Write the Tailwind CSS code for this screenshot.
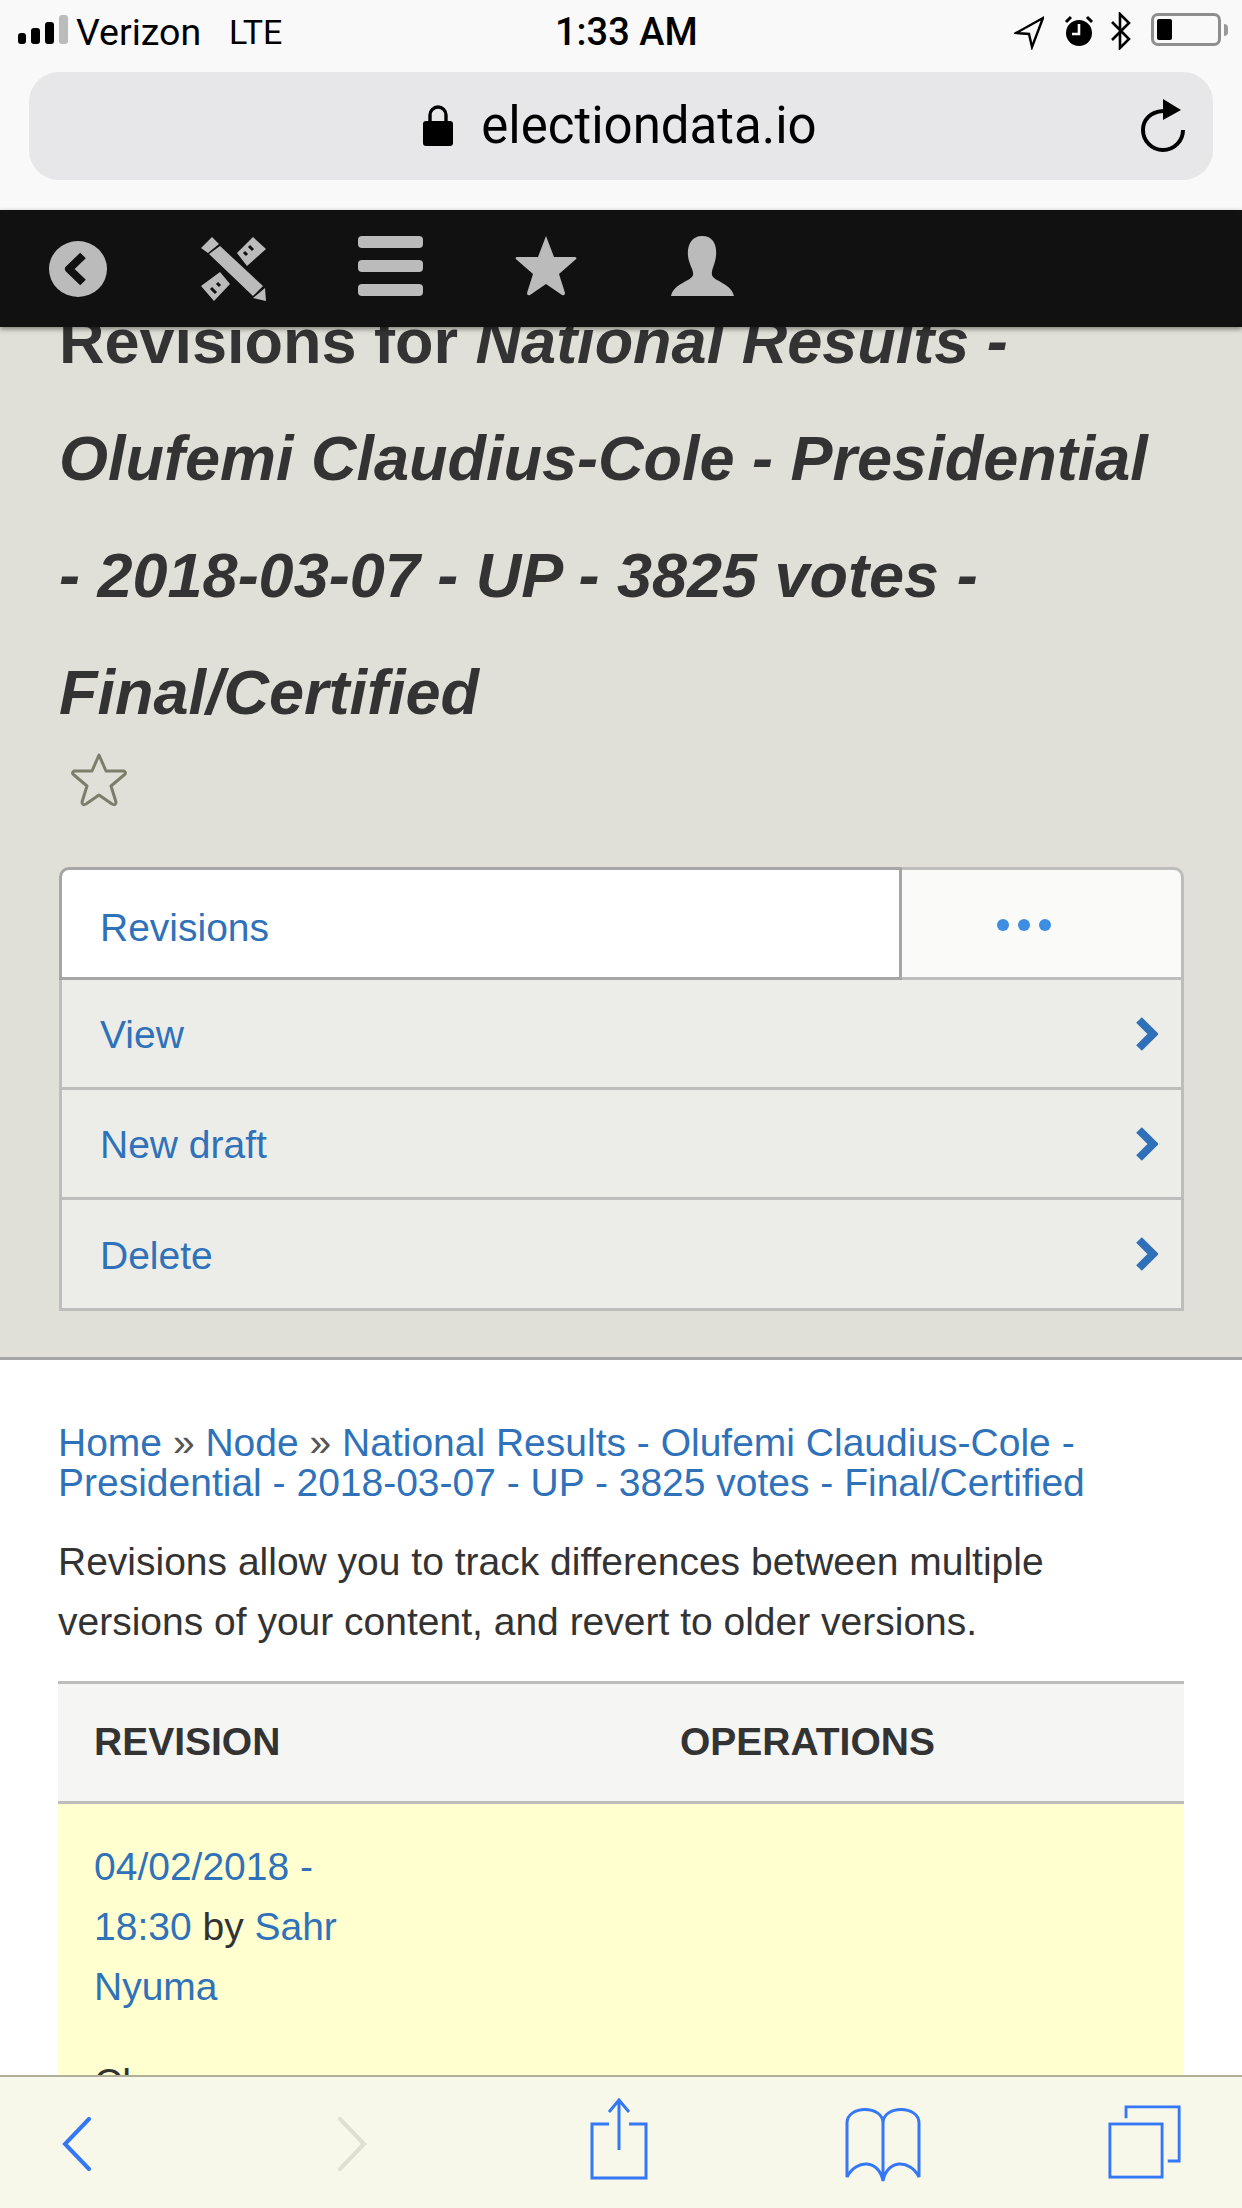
<!DOCTYPE html>
<html lang="en">
<head>
    <meta charset="UTF-8">
    <meta name="viewport" content="width=device-width, initial-scale=1.0">
    <title>Revisions - electiondata.io</title>
    <script src="https://cdn.jsdelivr.net/npm/@tailwindcss/browser@4"></script>
</head>
<body class="bg-white font-['Liberation_Sans',Arial,sans-serif] text-[#333]">
<div class="w-[1242px] h-[2208px] flex flex-col overflow-hidden">

    <!-- ios status bar + url bar -->
    <header class="h-[210px] shrink-0 bg-[#f9f9f9] text-black font-['Roboto',sans-serif]">
        <div class="h-[72px] flex items-start relative">
            <div class="flex items-end gap-[5px] ml-[18px] mt-[15px] h-[29px]">
                <span class="w-[8px] h-[11px] rounded-[3px] bg-black"></span>
                <span class="w-[9px] h-[16px] rounded-[3px] bg-black"></span>
                <span class="w-[9px] h-[22px] rounded-[3px] bg-black"></span>
                <span class="w-[9px] h-[29px] rounded-[3px] bg-[#bbb]"></span>
            </div>
            <span class="ml-[8px] mt-[11px] text-[37.5px] leading-[42px] w-[153px]">Verizon</span>
            <span class="mt-[11px] text-[34px] leading-[42px]">LTE</span>
            <span class="absolute left-[555px] top-[11px] text-[38px] leading-[42px] font-medium">1:33 AM</span>
            <div class="absolute left-[1014px] top-[12px] flex items-start">
                <svg width="30" height="34" viewBox="0 0 30 34" class="mt-[4px]"><path d="M29 2 2 17l13 1 3 13z" fill="none" stroke="#000" stroke-width="2.4" stroke-linejoin="miter"/></svg>
                <svg width="30" height="34" viewBox="0 0 30 34" class="ml-[20px] mt-[3px]"><circle cx="15" cy="18" r="13" fill="#000"/><path d="M15 9v10H8" fill="none" stroke="#f9f9f9" stroke-width="2.6"/><path d="M2 7l5-5M28 7l-5-5" stroke="#000" stroke-width="3"/></svg>
                <svg width="22" height="38" viewBox="0 0 22 38" class="ml-[16px]"><path d="M2 10 19 27 10 36V2l9 9L2 28" fill="none" stroke="#000" stroke-width="2.6"/></svg>
                <div class="ml-[19px] mt-[1px] flex items-center">
                    <div class="w-[70px] h-[33px] rounded-[7px] border-[3px] border-[#8e8e8e] p-[3px]"><div class="w-[15px] h-full rounded-[2px] bg-black"></div></div>
                    <div class="w-[4px] h-[12px] ml-[3px] rounded-r-full bg-[#9a9a9a]"></div>
                </div>
            </div>
        </div>
        <div class="mx-[29px] h-[108px] rounded-[30px] bg-[#e7e7e9] relative flex items-center justify-center">
            <div class="flex items-center gap-[28px] ml-[-2px]">
                <svg width="30" height="42" viewBox="0 0 30 42"><path d="M7 18V10a8 8 0 0 1 16 0v8" fill="none" stroke="#000" stroke-width="3.4"/><rect y="16" width="30" height="25" rx="3" fill="#000"/></svg>
                <span class="text-[51px] leading-[60px]">electiondata.io</span>
            </div>
            <svg width="46" height="54" viewBox="0 0 46 54" class="absolute right-[27px] top-[27px]"><path d="M3 31a20 20 0 1 0 40 0" fill="none" stroke="#000" stroke-width="4"/><path d="M3 31C3 21 10 13 23 12" fill="none" stroke="#000" stroke-width="4"/><path d="M23 0 41 11 23 21z" fill="#000"/></svg>
        </div>
    </header>

    <!-- site toolbar -->
    <nav class="h-[117px] shrink-0 bg-[#111] flex items-center shadow-[0_2px_5px_rgba(0,0,0,0.45)] relative z-10">
        <div class="w-[156px] flex justify-center">
            <svg width="58" height="56" viewBox="0 0 58 58" preserveAspectRatio="none"><ellipse cx="29" cy="29" rx="29" ry="29" fill="#bbb"/><path d="M34 15 20 29l14 14" fill="none" stroke="#111" stroke-width="8" stroke-linejoin="round"/></svg>
        </div>
        <div class="w-[156px] flex justify-center">
            <svg width="66" height="64" viewBox="0 0 66 64">
                <path d="M0 11 11 0l7 7-11 9zM8 17 19 9l43 40-10 10zM52 61 64 51l1 13z" fill="#bbb"/>
                <path d="M36 16 52 0l13 12-19 17zM0 49 19 35l10 12-16 17z" fill="#bbb"/>
                <path d="M48 9l4 4M43 15l3 3M10 51l5 5M16 46l3 3" stroke="#111" stroke-width="3"/>
            </svg>
        </div>
        <div class="w-[156px] flex justify-center">
            <div class="w-[65px] flex flex-col gap-[12px] mt-[-5px]">
                <span class="h-[12px] rounded-[4px] bg-[#bbb]"></span>
                <span class="h-[12px] rounded-[4px] bg-[#bbb]"></span>
                <span class="h-[12px] rounded-[4px] bg-[#bbb]"></span>
            </div>
        </div>
        <div class="w-[156px] flex justify-center">
            <svg width="62" height="60" viewBox="0 0 62 60" class="mt-[-5px]"><path d="M31 0 39 21H60Q63 22 60 24L44 38 50 57Q50 60 47 59L31 48 15 59Q12 60 12 57L18 38 2 24Q-1 22 2 21H23z" fill="#bbb"/></svg>
        </div>
        <div class="w-[156px] flex justify-center">
            <svg width="63" height="60" viewBox="0 0 63 60" class="mt-[-5px]"><path d="M31 0C43 0 46 10 45 20 44 29 40 34 41 39 42 45 60 47 63 60H0C3 47 21 45 22 39 23 34 18 29 17 20 16 10 20 0 31 0z" fill="#bbb"/></svg>
        </div>
    </nav>

    <main class="flex-1 min-h-0 overflow-hidden">
        <section class="bg-[#e0e0d8] h-[1033px] border-b-[3px] border-[#a6a6a6] px-[59px] overflow-hidden">
            <h1 class="text-[63px] leading-[117px] font-bold -mt-[44px]">Revisions for <em>National Results - Olufemi Claudius-Cole - Presidential - 2018-03-07 - UP - 3825 votes - Final/Certified</em></h1>
            <svg width="56" height="54" viewBox="0 0 56 54" class="ml-[12px] mt-[2px]"><path d="M28 2 35 18H53Q56 20 53 22L40 33 45 49Q45 53 41 51L28 42 15 51Q11 53 11 49L16 33 3 22Q0 20 3 18H21z" fill="none" stroke="#7d7d6c" stroke-width="3" stroke-linejoin="round"/></svg>

            <div class="mt-[60px] w-[1125px] text-[39px] text-[#2f72b9]">
                <div class="flex h-[113px]">
                    <div class="w-[843px] bg-white border-[3px] border-[#a6a6a6] rounded-tl-[10px] pl-[38px] pt-[33px] leading-[50px]">Revisions</div>
                    <div class="flex-1 bg-[#fafaf8] border-t-[3px] border-r-[3px] border-b-[3px] border-[#bdbdbb] rounded-tr-[10px] flex items-center justify-center gap-[9px] pt-[2px] pr-[36px]">
                        <span class="w-[12px] h-[12px] rounded-full bg-[#3d8de2]"></span>
                        <span class="w-[12px] h-[12px] rounded-full bg-[#3d8de2]"></span>
                        <span class="w-[12px] h-[12px] rounded-full bg-[#3d8de2]"></span>
                    </div>
                </div>
                <div class="flex items-center justify-between h-[110px] bg-[#ecedE8] border-x-[3px] border-b-[3px] border-[#bdbdbb] pl-[38px] pr-[23px]">
                    <span class="mt-[4px]">View</span>
                    <svg width="24" height="36" viewBox="0 0 24 36"><path d="M5 4 19 18 5 32" fill="none" stroke="#2f70b8" stroke-width="8"/></svg>
                </div>
                <div class="flex items-center justify-between h-[110px] bg-[#ecedE8] border-x-[3px] border-b-[3px] border-[#bdbdbb] pl-[38px] pr-[23px]">
                    <span class="mt-[4px]">New draft</span>
                    <svg width="24" height="36" viewBox="0 0 24 36"><path d="M5 4 19 18 5 32" fill="none" stroke="#2f70b8" stroke-width="8"/></svg>
                </div>
                <div class="flex items-center justify-between h-[111px] bg-[#ecedE8] border-x-[3px] border-b-[3px] border-[#bdbdbb] pl-[38px] pr-[23px]">
                    <span class="mt-[4px]">Delete</span>
                    <svg width="24" height="36" viewBox="0 0 24 36"><path d="M5 4 19 18 5 32" fill="none" stroke="#2f70b8" stroke-width="8"/></svg>
                </div>
            </div>
        </section>

        <section class="px-[58px] pt-[63px] text-[39px]">
            <p class="leading-[40px] text-[#2f72b9]">Home <span class="text-[#555]">»</span> Node <span class="text-[#555]">»</span> National Results - Olufemi Claudius-Cole - Presidential - 2018-03-07 - UP - 3825 votes - Final/Certified</p>
            <p class="leading-[60px] mt-[29px]">Revisions allow you to track differences between multiple versions of your content, and revert to older versions.</p>

            <div class="mt-[29px] w-[1126px]">
                <div class="flex items-center h-[123px] bg-[#f5f5f3] border-y-[3px] border-[#bdbdbb] font-bold text-[39px]">
                    <span class="w-[622px] pl-[36px]">REVISION</span>
                    <span>OPERATIONS</span>
                </div>
                <div class="bg-[#ffffd0] pt-[33px] pl-[36px] h-[400px] leading-[60px]">
                    <p class="w-[300px] text-[#2f72b9]">04/02/2018 - 18:30 <span class="text-[#333]">by</span> Sahr Nyuma</p>
                    <p class="mt-[36px]">Changes</p>
                </div>
            </div>
        </section>
    </main>

    <!-- safari bottom bar -->
    <footer class="h-[133px] shrink-0 bg-[#f7f7ea] border-t-[2px] border-[#b0b09a] flex items-start relative z-10">
        <svg width="32" height="54" viewBox="0 0 32 54" class="ml-[61px] mt-[40px]"><path d="M28 2 4 27l24 25" fill="none" stroke="#3478f6" stroke-width="4" stroke-linecap="round"/></svg>
        <svg width="32" height="54" viewBox="0 0 32 54" class="ml-[243px] mt-[40px]"><path d="M4 2 28 27 4 52" fill="none" stroke="#dfdfd2" stroke-width="4" stroke-linecap="round"/></svg>
        <svg width="60" height="84" viewBox="0 0 60 84" class="ml-[221px] mt-[21px]"><path d="M20 26H3V80H57V26H40M30 2V52M20 14 30 2 40 14" fill="none" stroke="#3478f6" stroke-width="3"/></svg>
        <svg width="78" height="76" viewBox="0 0 78 76" class="ml-[195px] mt-[30px]"><path d="M39 16C39 -2 3 -2 3 16V70C12 52 35 52 39 74 43 52 66 52 75 70V16C75 -2 39 -2 39 16V74" fill="none" stroke="#3478f6" stroke-width="3"/></svg>
        <svg width="74" height="76" viewBox="0 0 78 78" class="ml-[186px] mt-[27px]"><path d="M19 14V2H75V59H63" fill="none" stroke="#3478f6" stroke-width="3"/><rect x="2" y="20" width="55" height="56" fill="none" stroke="#3478f6" stroke-width="3"/></svg>
    </footer>
</div>
</body>
</html>
